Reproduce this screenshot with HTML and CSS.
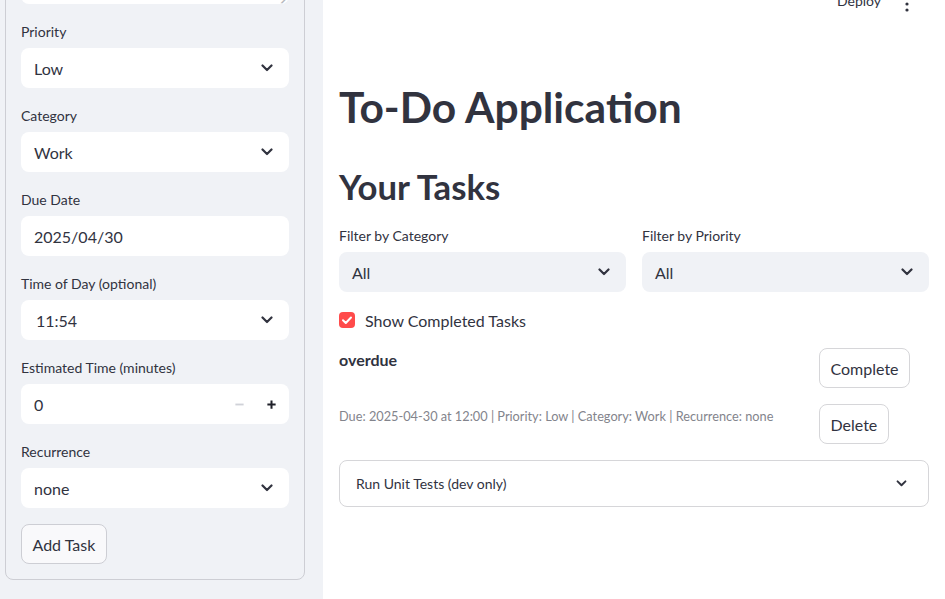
FILE: index.html
```html
<!DOCTYPE html>
<html lang="en">
<head>
<meta charset="utf-8">
<title>To-Do Application</title>
<link rel="stylesheet" href="styles.css">
</head>
<body>
<div class="app">
  <aside class="sidebar">
    <form class="task-form">
      <div class="textarea-stub"><span class="resize">///</span></div>

      <div class="field">
        <label class="label">Priority</label>
        <div class="select light"><span>Low</span><svg class="chev" viewBox="0 0 12 8"><path d="M1.5 1.5 L6 6 L10.5 1.5"/></svg></div>
      </div>

      <div class="field">
        <label class="label">Category</label>
        <div class="select light"><span>Work</span><svg class="chev" viewBox="0 0 12 8"><path d="M1.5 1.5 L6 6 L10.5 1.5"/></svg></div>
      </div>

      <div class="field">
        <label class="label">Due Date</label>
        <div class="select light"><span>2025/04/30</span></div>
      </div>

      <div class="field">
        <label class="label">Time of Day (optional)</label>
        <div class="select light"><span class="time">11:54</span><svg class="chev" viewBox="0 0 12 8"><path d="M1.5 1.5 L6 6 L10.5 1.5"/></svg></div>
      </div>

      <div class="field">
        <label class="label">Estimated Time (minutes)</label>
        <div class="select light number">
          <span class="num-value">0</span>
          <span class="step minus"><svg viewBox="0 0 12 12"><path d="M1.5 6 H10.5"/></svg></span>
          <span class="step plus"><svg viewBox="0 0 12 12"><path d="M1.5 6 H10.5 M6 1.5 V10.5"/></svg></span>
        </div>
      </div>

      <div class="field">
        <label class="label">Recurrence</label>
        <div class="select light"><span>none</span><svg class="chev" viewBox="0 0 12 8"><path d="M1.5 1.5 L6 6 L10.5 1.5"/></svg></div>
      </div>

      <div class="field">
        <button type="button" class="btn btn-form">Add Task</button>
      </div>
    </form>
  </aside>

  <main class="main">
    <header class="topbar">
      <span class="deploy">Deploy</span>
      <svg class="kebab" viewBox="0 0 4 16"><circle cx="2" cy="2" r="1.6"/><circle cx="2" cy="8" r="1.6"/><circle cx="2" cy="14" r="1.6"/></svg>
    </header>

    <h1 class="title">To-Do Application</h1>
    <h2 class="subtitle">Your Tasks</h2>

    <div class="filters">
      <div class="field">
        <label class="label">Filter by Category</label>
        <div class="select grey"><span>All</span><svg class="chev" viewBox="0 0 12 8"><path d="M1.5 1.5 L6 6 L10.5 1.5"/></svg></div>
      </div>
      <div class="field">
        <label class="label">Filter by Priority</label>
        <div class="select grey"><span>All</span><svg class="chev" viewBox="0 0 12 8"><path d="M1.5 1.5 L6 6 L10.5 1.5"/></svg></div>
      </div>
    </div>

    <div class="checkbox-row">
      <span class="checkbox"><svg viewBox="0 0 16 16"><path d="M4 8.3 L6.8 11 L12 5.5"/></svg></span>
      <span>Show Completed Tasks</span>
    </div>

    <div class="task">
      <div class="task-info">
        <p class="task-name">overdue</p>
        <p class="caption">Due: 2025-04-30 at 12:00 | Priority: Low | Category: Work | Recurrence: none</p>
      </div>
      <div class="task-actions">
        <button type="button" class="btn">Complete</button>
        <button type="button" class="btn">Delete</button>
      </div>
    </div>

    <div class="expander">
      <span>Run Unit Tests (dev only)</span>
      <svg class="chev small" viewBox="0 0 12 8"><path d="M1.5 1.5 L6 6 L10.5 1.5"/></svg>
    </div>
  </main>
</div>
</body>
</html>
```

FILE: styles.css
```css
* { box-sizing: border-box; }

html, body {
  margin: 0;
  padding: 0;
  height: 100%;
}

body {
  font-family: Lato, "Noto Sans", "Liberation Sans", sans-serif;
  color: #31333f;
  font-size: 16px;
  background: #ffffff;
}

.app {
  display: flex;
  height: 599px;
  overflow: hidden;
}

/* ---------- sidebar ---------- */
.sidebar {
  width: 323px;
  flex: none;
  background: #f0f2f6;
  padding: 0 18px 0 5px;
  overflow: hidden;
}

.task-form {
  margin-top: -32px;
  border: 1px solid #cdced4;
  border-radius: 8px;
  padding: 15px;
  display: flex;
  flex-direction: column;
  gap: 16px;
}

.textarea-stub {
  height: 20px;
  background: #ffffff;
  border-radius: 0 0 8px 8px;
  position: relative;
}

.resize {
  position: absolute;
  right: 4px;
  bottom: 0;
  font-size: 7px;
  line-height: 7px;
  color: #8d8f97;
  letter-spacing: -1px;
  transform: skewX(-30deg);
}

.field {
  display: flex;
  flex-direction: column;
}

.label {
  font-size: 14px;
  line-height: 24px;
  min-height: 24px;
  margin-bottom: 4px;
  color: #31333f;
}

.select {
  height: 40px;
  border-radius: 8px;
  display: flex;
  align-items: center;
  padding: 0 16px 0 13px;
  font-size: 16px;
  color: #31333f;
}

.select > span:first-child { flex: 1; }

.select.light { background: #ffffff; }
.select.grey { background: #f0f2f6; }

.time { padding-left: 2px; }

.chev {
  width: 12px;
  height: 8px;
  fill: none;
  stroke: #31333f;
  stroke-width: 2.2;
  stroke-linecap: round;
  stroke-linejoin: round;
}

.chev.small {
  width: 11px;
  height: 7px;
}

.number { padding-right: 2px; }

.step {
  width: 32px;
  height: 32px;
  display: flex;
  align-items: center;
  justify-content: center;
}

.step svg {
  width: 11px;
  height: 11px;
  fill: none;
  stroke-width: 2;
}

.step.minus svg { stroke: #d0d2d8; }
.step.plus svg { stroke: #1f2029; stroke-width: 2.2; }

.btn {
  font-family: inherit;
  font-size: 16px;
  color: #31333f;
  background: #ffffff;
  border: 1px solid #d6d6d9;
  border-radius: 8px;
  height: 40px;
  padding: 0 10.5px;
  align-self: flex-start;
  cursor: pointer;
}

.btn-form { background: #f9f9fb; border-color: #cdced4; }

/* ---------- main ---------- */
.main {
  flex: 1;
  position: relative;
  padding: 81px 16px 0 16px;
}

.topbar {
  position: absolute;
  top: -10px;
  right: 36px;
  display: flex;
  align-items: center;
  gap: 24px;
  font-size: 14px;
  line-height: 20px;
}

.kebab {
  width: 4px;
  height: 16px;
  fill: #31333f;
  margin-top: 6px;
}

.title {
  margin: 0;
  font-size: 42.5px;
  line-height: 52px;
  font-weight: 700;
  padding: 0;
}

.subtitle {
  margin: 33px 0 0 0;
  font-size: 34.7px;
  line-height: 42px;
  font-weight: 700;
}

.filters {
  margin-top: 16px;
  display: grid;
  grid-template-columns: 1fr 1fr;
  gap: 16px;
}

.checkbox-row {
  margin-top: 16px;
  display: flex;
  align-items: center;
  gap: 10px;
  height: 24px;
  font-size: 16px;
}

.checkbox {
  width: 16px;
  height: 16px;
  border-radius: 4px;
  background: #ff4b4b;
  display: flex;
}

.checkbox svg {
  width: 16px;
  height: 16px;
  fill: none;
  stroke: #ffffff;
  stroke-width: 2;
  stroke-linecap: round;
  stroke-linejoin: round;
}

.task {
  margin-top: 16px;
  display: grid;
  grid-template-columns: 1fr 110px;
}

.task-info p { margin: 0; }

.task-name {
  font-weight: 700;
  line-height: 24px;
}

.caption {
  margin-top: 34px !important;
  font-size: 12.75px;
  line-height: 21px;
  color: #83848c;
}

.task-actions {
  display: flex;
  flex-direction: column;
  gap: 16px;
}

.expander {
  margin-top: 16px;
  height: 47px;
  border: 1px solid #d6d6d9;
  border-radius: 8px;
  display: flex;
  align-items: center;
  justify-content: space-between;
  padding: 0 21px 0 16px;
  font-size: 14px;
}
```
